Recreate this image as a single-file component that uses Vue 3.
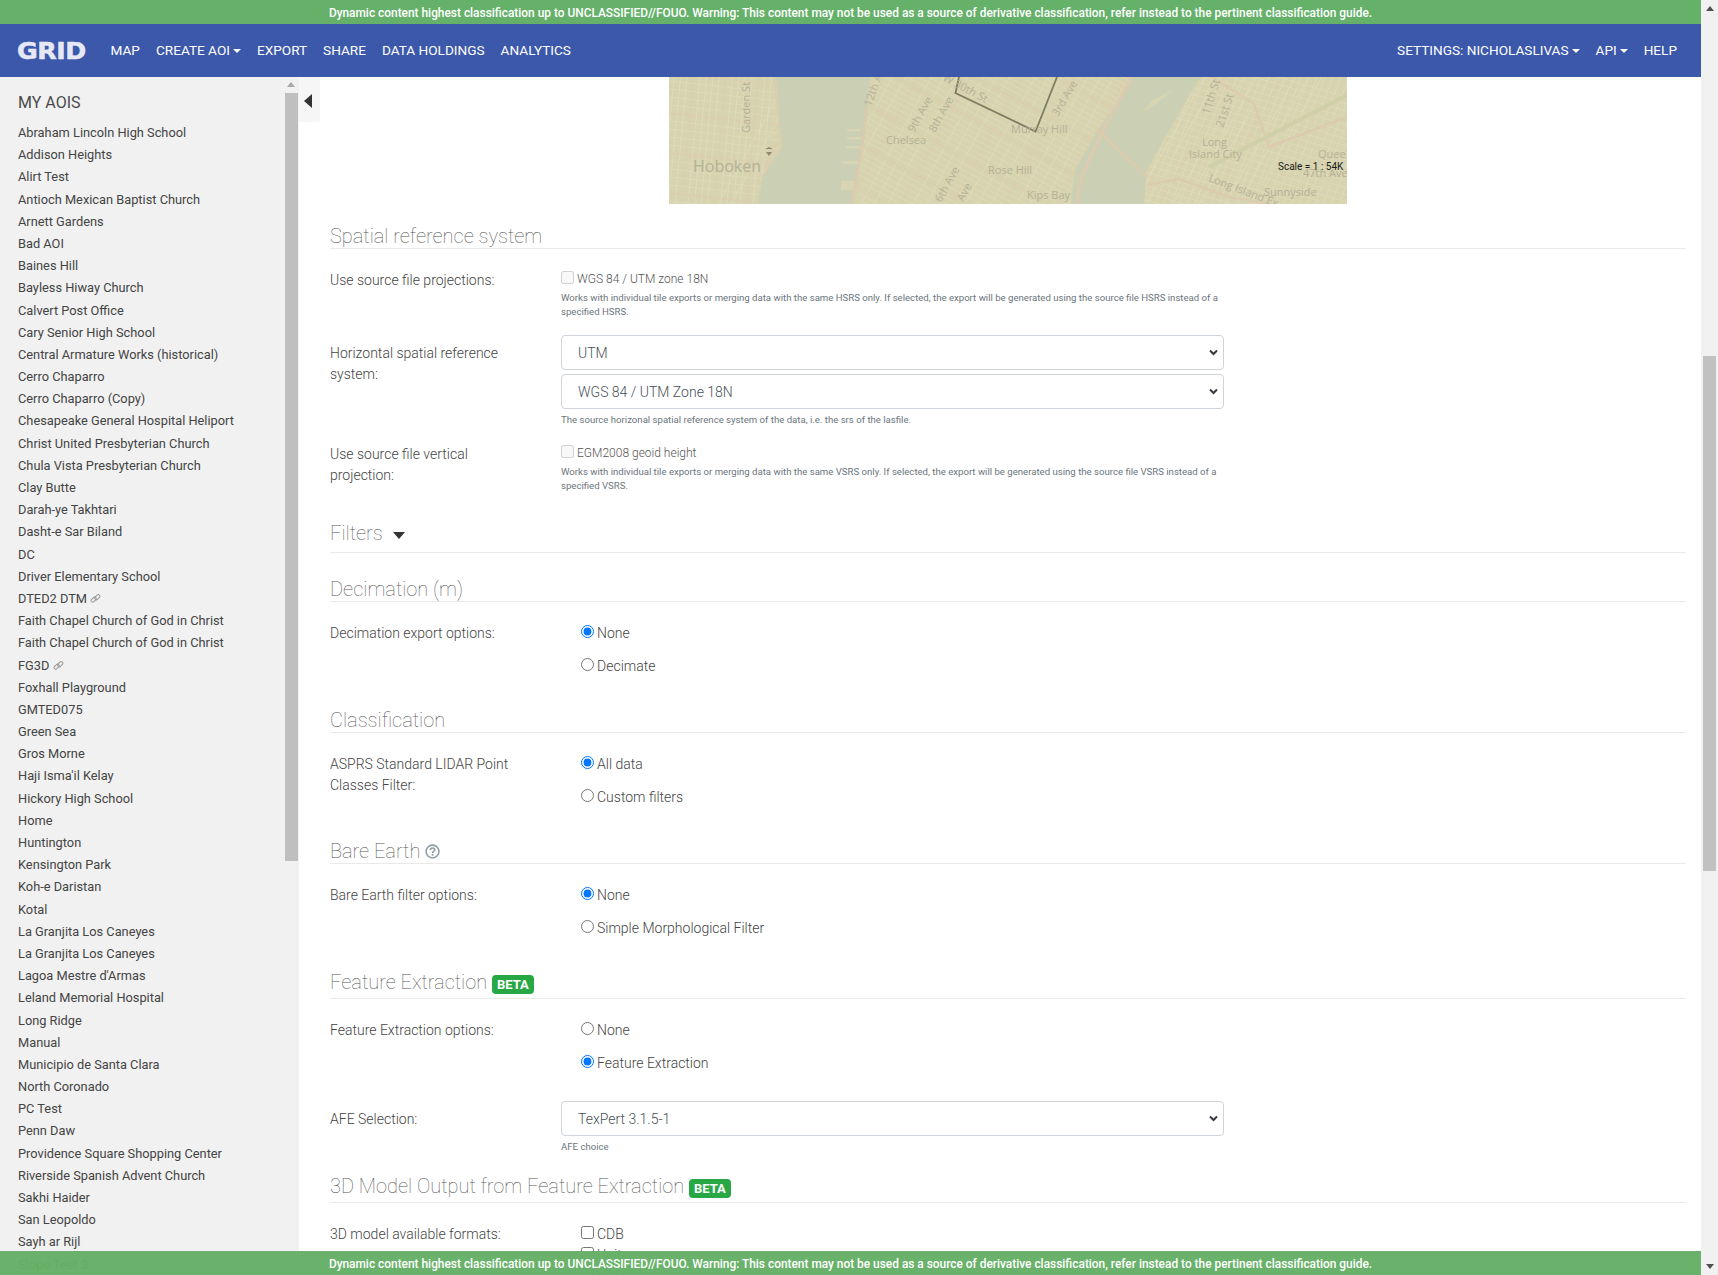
<template>
  <div class="page">
    <div class="window">
      <div class="banner">{{ bannerText }}</div>
      <nav class="navbar">
        <span class="logo-box"><span class="logo">GRID</span></span>
        <a class="nav-link">Map</a>
        <a class="nav-link caret">Create AOI</a>
        <a class="nav-link">Export</a>
        <a class="nav-link">Share</a>
        <a class="nav-link">Data Holdings</a>
        <a class="nav-link">Analytics</a>
        <span class="nav-spacer"></span>
        <a class="nav-link caret">Settings: nicholaslivas</a>
        <a class="nav-link caret">API</a>
        <a class="nav-link">Help</a>
      </nav>

      <div class="layout">
        <aside class="sidebar">
          <div class="aoi-list">
            <h2 class="aoi-title">MY AOIS</h2>
            <div v-for="(aoi, i) in aois" :key="i" class="aoi-item">
              {{ aoi.name }}
              <svg v-if="aoi.shared" class="link-icon" viewBox="0 0 12 12" fill="none" stroke="#9a9a9a" stroke-width="1.1">
                <rect x="0.8" y="5.4" width="6.4" height="3.6" rx="1.8" transform="rotate(-45 4 7.2)" />
                <rect x="4.8" y="2.8" width="6.4" height="3.6" rx="1.8" transform="rotate(-45 8 4.6)" />
              </svg>
            </div>
          </div>
          <div class="side-scroll">
            <span class="arrow-up light"></span>
            <div class="side-thumb"></div>
          </div>
          <div class="toggle-tab"><span class="toggle-arrow"></span></div>
        </aside>

        <main class="content">
          <svg class="map" viewBox="0 0 678 127" width="678" height="127">
            <defs>
              <clipPath id="land">
                <path d="M0 0H107L113 70L93 100L89 127H0Z M201 0H464L430 52L406 93L402 127H184L191 90L198 43Z M531 0H678V127H475L478 93L504 46Z" />
              </clipPath>
            </defs>
            <rect width="678" height="127" fill="#d6d3ae" />
            <path d="M107 0H201L198 43L191 90L184 127H89L93 100L113 70Z" fill="#cbcfb4" />
            <path d="M464 0H531L504 46L478 93L475 127H402L406 93L430 52Z" fill="#cbcfb4" />
            <path d="M504 13L488 26L473 36L482 24Z" fill="#d5d6b0" />
            <g clip-path="url(#land)">
              <line v-for="(l, i) in streets" :key="i" :x1="l[0]" :y1="l[1]" :x2="l[2]" :y2="l[3]" :stroke="l[4]" :stroke-width="l[5]" />
            </g>
            <g fill="#d8d5b5">
              <rect x="178" y="52" width="14" height="2.5" />
              <rect x="178" y="60" width="14" height="2.5" />
              <rect x="177" y="69" width="15" height="2.5" />
              <rect x="174" y="84" width="17" height="3" />
              <rect x="172" y="104" width="14" height="9" />
              <rect x="91" y="56" width="18" height="1.5" />
              <rect x="91" y="61" width="20" height="1.5" />
            </g>
            <path d="M105 0L111 55L113 70L93 100" fill="none" stroke="#d9cdb1" stroke-width="1.6" />
            <path d="M198 30L193 70L188 100L183 127" fill="none" stroke="#dccbae" stroke-width="2.5" />
            <path d="M463 0L437 48L412 100L408 127" fill="none" stroke="#dccbae" stroke-width="3" />
            <path d="M543 0L585 27L600 70M428 52L478 100M478 108L510 102L560 120L600 127M600 70L678 40" fill="none" stroke="#dccbae" stroke-width="2.5" />
            <path d="M540 90L678 18" fill="none" stroke="#cfcfa8" stroke-width="4" />
            <path d="M97 75H103L100 79Z M96 72H104L100 70Z" fill="#8f8b6e" />
            <path d="M290 0L286.5 16L366.5 54.5L388 0" fill="none" stroke="#7d7d62" stroke-width="1.8" />
            <g class="map-labels">
              <text x="24" y="95" font-size="16">Hoboken</text>
              <text x="217" y="67" font-size="11">Chelsea</text>
              <text x="342" y="56" font-size="11">Murray Hill</text>
              <text x="319" y="97" font-size="11">Rose Hill</text>
              <text x="358" y="122" font-size="11">Kips Bay</text>
              <text x="533" y="69" font-size="11">Long</text>
              <text x="520" y="81" font-size="11">Island City</text>
              <text x="595" y="119" font-size="11">Sunnyside</text>
              <text x="649" y="81" font-size="11">Quee</text>
              <text x="634" y="100" font-size="11">47th Ave</text>
              <text font-size="11" transform="translate(81 56) rotate(-90)">Garden St</text>
              <text font-size="11" transform="translate(202 30) rotate(-70)">12th Ave</text>
              <text font-size="11" transform="translate(245 56) rotate(-61)">9th Ave</text>
              <text font-size="11" transform="translate(266 56) rotate(-61)">8th Ave</text>
              <text font-size="11" transform="translate(389 40) rotate(-60)">3rd Ave</text>
              <text font-size="11" transform="translate(272 126) rotate(-61)">6th Ave</text>
              <text font-size="11" transform="translate(294 125) rotate(-61)">Ave</text>
              <text font-size="11" transform="translate(273 3) rotate(28)">W 30th St</text>
              <text font-size="11" transform="translate(540 38) rotate(-72)">11th St</text>
              <text font-size="11" transform="translate(554 51) rotate(-72)">21st St</text>
              <text font-size="11" transform="translate(539 104) rotate(21)">Long Island Ex</text>
            </g>
            <text class="map-scale" x="609" y="93">Scale = 1 : 54K</text>
          </svg>

          <h3 class="section-title first">Spatial reference system</h3>

          <div class="form-row row-a">
            <label class="form-label">Use source file projections:</label>
            <div>
              <div class="check-line"><input type="checkbox" disabled /><span>WGS 84 / UTM zone 18N</span></div>
              <small class="help">Works with individual tile exports or merging data with the same HSRS only. If selected, the export will be generated using the source file HSRS instead of a specified HSRS.</small>
            </div>
          </div>

          <div class="form-row row-b">
            <label class="form-label select-label">Horizontal spatial reference system:</label>
            <div>
              <select class="form-select"><option>UTM</option></select>
              <select class="form-select second"><option>WGS 84 / UTM Zone 18N</option></select>
              <small class="help one">The source horizonal spatial reference system of the data, i.e. the srs of the lasfile.</small>
            </div>
          </div>

          <div class="form-row row-c">
            <label class="form-label">Use source file vertical projection:</label>
            <div>
              <div class="check-line"><input type="checkbox" disabled /><span>EGM2008 geoid height</span></div>
              <small class="help">Works with individual tile exports or merging data with the same VSRS only. If selected, the export will be generated using the source file VSRS instead of a specified VSRS.</small>
            </div>
          </div>

          <h3 class="section-title filters">Filters <span class="down-caret"></span></h3>

          <h3 class="section-title">Decimation (m)</h3>
          <div class="form-row">
            <label class="form-label">Decimation export options:</label>
            <div class="options">
              <label class="option"><input type="radio" name="decimate" checked />None</label>
              <label class="option"><input type="radio" name="decimate" />Decimate</label>
            </div>
          </div>

          <h3 class="section-title">Classification</h3>
          <div class="form-row">
            <label class="form-label">ASPRS Standard LIDAR Point Classes Filter:</label>
            <div class="options">
              <label class="option"><input type="radio" name="classes" checked />All data</label>
              <label class="option"><input type="radio" name="classes" />Custom filters</label>
            </div>
          </div>

          <h3 class="section-title">
            Bare Earth
            <svg class="help-icon" viewBox="0 0 14 14" fill="none" stroke="#8b9ea6">
              <circle cx="7" cy="7" r="6" stroke-width="1.5" />
              <path d="M5 5.6C5 3.2 9.1 3.2 9.1 5.5C9.1 6.9 7 6.9 7 8.4" stroke-width="1.5" />
              <path d="M7 9.4V11" stroke-width="1.6" />
            </svg>
          </h3>
          <div class="form-row">
            <label class="form-label">Bare Earth filter options:</label>
            <div class="options">
              <label class="option"><input type="radio" name="bare" checked />None</label>
              <label class="option"><input type="radio" name="bare" />Simple Morphological Filter</label>
            </div>
          </div>

          <h3 class="section-title with-badge">Feature Extraction <span class="badge">BETA</span></h3>
          <div class="form-row">
            <label class="form-label">Feature Extraction options:</label>
            <div class="options">
              <label class="option"><input type="radio" name="feature" />None</label>
              <label class="option"><input type="radio" name="feature" checked />Feature Extraction</label>
            </div>
          </div>

          <div class="form-row row-afe">
            <label class="form-label select-label">AFE Selection:</label>
            <div>
              <select class="form-select"><option>TexPert 3.1.5-1</option></select>
              <small class="help one">AFE choice</small>
            </div>
          </div>

          <h3 class="section-title with-badge after-select">3D Model Output from Feature Extraction <span class="badge">BETA</span></h3>
          <div class="form-row">
            <label class="form-label">3D model available formats:</label>
            <div class="formats">
              <label class="option"><input type="checkbox" />CDB</label>
              <label class="option"><input type="checkbox" />Unity</label>
              <label class="option"><input type="checkbox" />VBS3</label>
            </div>
          </div>
        </main>
      </div>

      <div class="banner banner-bottom">{{ bannerText }}</div>
    </div>

    <div class="page-scroll">
      <span class="arrow-up"></span>
      <div class="page-thumb"></div>
      <span class="arrow-down"></span>
    </div>
  </div>
</template>

<script setup>
const bannerText =
  "Dynamic content highest classification up to UNCLASSIFIED//FOUO. Warning: This content may not be used as a source of derivative classification, refer instead to the pertinent classification guide."

const names = [
  "Abraham Lincoln High School",
  "Addison Heights",
  "Alirt Test",
  "Antioch Mexican Baptist Church",
  "Arnett Gardens",
  "Bad AOI",
  "Baines Hill",
  "Bayless Hiway Church",
  "Calvert Post Office",
  "Cary Senior High School",
  "Central Armature Works (historical)",
  "Cerro Chaparro",
  "Cerro Chaparro (Copy)",
  "Chesapeake General Hospital Heliport",
  "Christ United Presbyterian Church",
  "Chula Vista Presbyterian Church",
  "Clay Butte",
  "Darah-ye Takhtari",
  "Dasht-e Sar Biland",
  "DC",
  "Driver Elementary School",
  "DTED2 DTM",
  "Faith Chapel Church of God in Christ",
  "Faith Chapel Church of God in Christ",
  "FG3D",
  "Foxhall Playground",
  "GMTED075",
  "Green Sea",
  "Gros Morne",
  "Haji Isma'il Kelay",
  "Hickory High School",
  "Home",
  "Huntington",
  "Kensington Park",
  "Koh-e Daristan",
  "Kotal",
  "La Granjita Los Caneyes",
  "La Granjita Los Caneyes",
  "Lagoa Mestre d'Armas",
  "Leland Memorial Hospital",
  "Long Ridge",
  "Manual",
  "Municipio de Santa Clara",
  "North Coronado",
  "PC Test",
  "Penn Daw",
  "Providence Square Shopping Center",
  "Riverside Spanish Advent Church",
  "Sakhi Haider",
  "San Leopoldo",
  "Sayh ar Rijl",
  "Slope Test 3"
]
const aois = names.map((name) => ({ name, shared: name == "DTED2 DTM" || name == "FG3D" }))

// street grid for the map thumbnail
const streets = []
const minor = "#dfdbbd"
const major = "#dccdb0"
// manhattan avenues and cross streets
for (let i = -6; i < 36; i++) {
  const x = 120 + i * 13
  streets.push([x, 140, x + 82, -8, i % 4 == 0 ? major : minor, i % 4 == 0 ? 1.5 : 0.9])
}
for (let i = -4; i < 70; i++) {
  const y = -150 + i * 6.2
  streets.push([190, y, 480, y + 158, i % 7 == 0 ? major : minor, i % 7 == 0 ? 1.3 : 0.8])
}
// hoboken, left of the river
for (let i = 0; i < 18; i++) {
  streets.push([i * 6.5 - 8, 0, i * 6.5 - 20, 127, i % 5 == 0 ? major : minor, 0.9])
  streets.push([0, i * 8 - 4, 110, i * 8 + 8, i % 5 == 0 ? major : minor, i % 5 == 0 ? 1.3 : 0.8])
}
// queens, right of the river
for (let i = 0; i < 30; i++) {
  streets.push([470 + i * 8, 127, 520 + i * 8, 0, minor, 0.8])
  streets.push([470, i * 7 - 40, 678, i * 7 + 20, minor, 0.8])
}
</script>

<style scoped>
.page {
  display: flex;
  width: 1718px;
  height: 1275px;
  overflow: hidden;
  font-family: Roboto, "Liberation Sans", sans-serif;
  font-size: 14px;
  color: #4a4a4a;
  background: #fff;
}

.window {
  position: relative;
  flex: 1;
  min-width: 0;
  display: flex;
  flex-direction: column;
}

.banner {
  height: 24px;
  line-height: 26px;
  flex: none;
  text-align: center;
  font-size: 11.9px;
  font-weight: 500;
  color: #fff;
  background: #66b16a;
}
.banner-bottom {
  position: absolute;
  left: 0;
  right: 0;
  bottom: 0;
  background: rgba(101, 175, 102, 0.97);
}

.navbar {
  height: 53px;
  flex: none;
  display: flex;
  align-items: center;
  padding: 0 16px 0 17px;
  background: #3c58aa;
}
.logo-box {
  width: 85.5px;
}
.logo {
  display: inline-block;
  font-family: "DejaVu Sans", sans-serif;
  font-size: 23px;
  font-weight: 700;
  letter-spacing: -0.4px;
  color: #e6e9f5;
  -webkit-text-stroke: 0.5px #e6e9f5;
  transform: scaleX(1.1);
  transform-origin: left center;
}
.nav-link {
  margin-top: -2px;
  padding: 0 8px;
  font-size: 13.6px;
  color: #fff;
  text-transform: uppercase;
}
.nav-link.caret::after {
  content: "";
  display: inline-block;
  margin-left: 3px;
  vertical-align: 2px;
  border-top: 4px solid #fff;
  border-left: 4px solid transparent;
  border-right: 4px solid transparent;
}
.nav-spacer {
  flex: 1;
}

.layout {
  flex: 1;
  min-height: 0;
  display: flex;
}

.sidebar {
  position: relative;
  width: 299px;
  flex: none;
  display: flex;
  background: #f1f1f1;
}
.aoi-list {
  flex: 1;
  min-width: 0;
  padding: 15px 0 0 18px;
  overflow: hidden;
}
.aoi-title {
  margin: 0 0 8px;
  height: 22px;
  line-height: 22px;
  font-size: 16px;
  font-weight: 400;
  color: #4a4a4a;
}
.aoi-item {
  height: 22.2px;
  line-height: 22px;
  font-size: 12.8px;
  white-space: nowrap;
  color: #444;
}
.link-icon {
  width: 11px;
  height: 11px;
  vertical-align: -1px;
}
.side-scroll {
  width: 14px;
  margin-right: 1px;
  flex: none;
  display: flex;
  flex-direction: column;
  align-items: center;
}
.side-thumb {
  width: 13px;
  height: 768px;
  margin-top: 6px;
  background: #bfbfbf;
}
.arrow-up {
  display: block;
  width: 0;
  height: 0;
  margin-top: 6px;
  border-bottom: 5px solid #505050;
  border-left: 4px solid transparent;
  border-right: 4px solid transparent;
}
.arrow-up.light {
  margin-top: 5px;
  border-bottom-color: #a8a8a8;
}
.arrow-down {
  display: block;
  width: 0;
  height: 0;
  margin-top: auto;
  margin-bottom: 6px;
  border-top: 5px solid #505050;
  border-left: 4px solid transparent;
  border-right: 4px solid transparent;
}
.toggle-tab {
  position: absolute;
  left: 299px;
  top: 0;
  width: 21px;
  height: 45px;
  display: flex;
  justify-content: center;
  padding-top: 17px;
  box-sizing: border-box;
  background: #f6f6f6;
  border-radius: 0 0 2px 0;
}
.toggle-arrow {
  width: 0;
  height: 0;
  margin-right: 3px;
  border-right: 8px solid #333;
  border-top: 7px solid transparent;
  border-bottom: 7px solid transparent;
}

.content {
  flex: 1;
  min-width: 0;
  padding: 0 15px 0 31px;
  overflow: hidden;
}
.map {
  display: block;
  margin: 0 auto;
}
.map-labels text {
  font-family: "Open Sans", sans-serif;
  fill: #b5b197;
}
.map-scale {
  font-family: Roboto, sans-serif;
  font-size: 10px;
  fill: #1a1a1a;
}

.section-title {
  margin: 19px 0 0;
  height: 24px;
  line-height: 24px;
  box-sizing: content-box;
  font-size: 20px;
  font-weight: 100;
  color: #555;
  border-bottom: 1px solid #e9e9e9;
}
.section-title.first {
  margin-top: 20px;
}
.section-title.filters {
  margin-top: 28px;
  height: 31px;
}
.section-title.filters + .section-title {
  margin-top: 24px;
}
.section-title.with-badge {
  padding-bottom: 4px;
}
.section-title.after-select {
  margin-top: 20px;
}
.down-caret {
  display: inline-block;
  margin-left: 5px;
  vertical-align: 1px;
  border-top: 7px solid #333;
  border-left: 6px solid transparent;
  border-right: 6px solid transparent;
}
.help-icon {
  width: 15px;
  height: 15px;
  vertical-align: -1px;
}
.badge {
  display: inline-block;
  height: 19px;
  line-height: 20px;
  padding: 0 5px;
  vertical-align: 0;
  font-size: 13px;
  font-weight: 700;
  color: #fff;
  background: #28a745;
  border-radius: 4px;
}

.form-row {
  display: grid;
  grid-template-columns: 231px 663px;
  margin-top: 21px;
}
.form-label {
  line-height: 21px;
  padding-right: 40px;
  font-weight: 300;
  color: #444;
}
.select-label {
  padding-top: 7px;
}
.row-a {
  margin-top: 20px;
}
.row-a .form-label,
.row-c .form-label {
  padding-top: 1px;
}
.row-b .form-label,
.row-afe .form-label {
  padding-top: 8px;
}
.row-b {
  margin-top: 16px;
}
.row-c {
  margin-top: 16px;
}
.row-afe {
  margin-top: 15px;
}
.check-line {
  display: flex;
  align-items: center;
  height: 20px;
  font-size: 12px;
  font-weight: 300;
  color: #555;
}
.check-line input {
  width: 13px;
  height: 13px;
  margin: -4px 3px 0 0;
}
.help {
  display: block;
  margin-top: 2px;
  font-size: 9.6px;
  line-height: 14px;
  color: #6c757d;
}
.help.one {
  margin-top: 4px;
}
.form-select {
  display: block;
  width: 663px;
  height: 35px;
  padding: 6px 12px 6px 16px;
  font-family: inherit;
  font-size: 14px;
  font-weight: 300;
  color: #495057;
  appearance: none;
  background: #fff url("data:image/svg+xml,%3Csvg xmlns='http://www.w3.org/2000/svg' width='9' height='7'%3E%3Cpath d='M1 1.5L4.5 5L8 1.5' fill='none' stroke='%23343a40' stroke-width='2'/%3E%3C/svg%3E") no-repeat right 5px center;
  border: 1px solid #ced4da;
  border-radius: 4px;
}
.form-select.second {
  margin-top: 4px;
}
.options {
  display: flex;
  flex-direction: column;
  gap: 12px;
  margin-top: -1px;
  padding: 0 0 13px 20px;
}
.formats {
  margin-top: -1px;
  padding-left: 20px;
}
.option {
  display: flex;
  align-items: center;
  height: 21px;
  font-weight: 300;
  color: #444;
}
.option input {
  width: 13px;
  height: 13px;
  margin: -2px 3px 0 0;
}

.page-scroll {
  width: 17px;
  flex: none;
  display: flex;
  flex-direction: column;
  align-items: center;
  background: #f1f1f1;
}
.page-thumb {
  width: 13px;
  height: 515px;
  margin-top: 345px;
  background: #c1c1c1;
}
</style>

<style>
body {
  margin: 0;
  overflow: hidden;
}
</style>
